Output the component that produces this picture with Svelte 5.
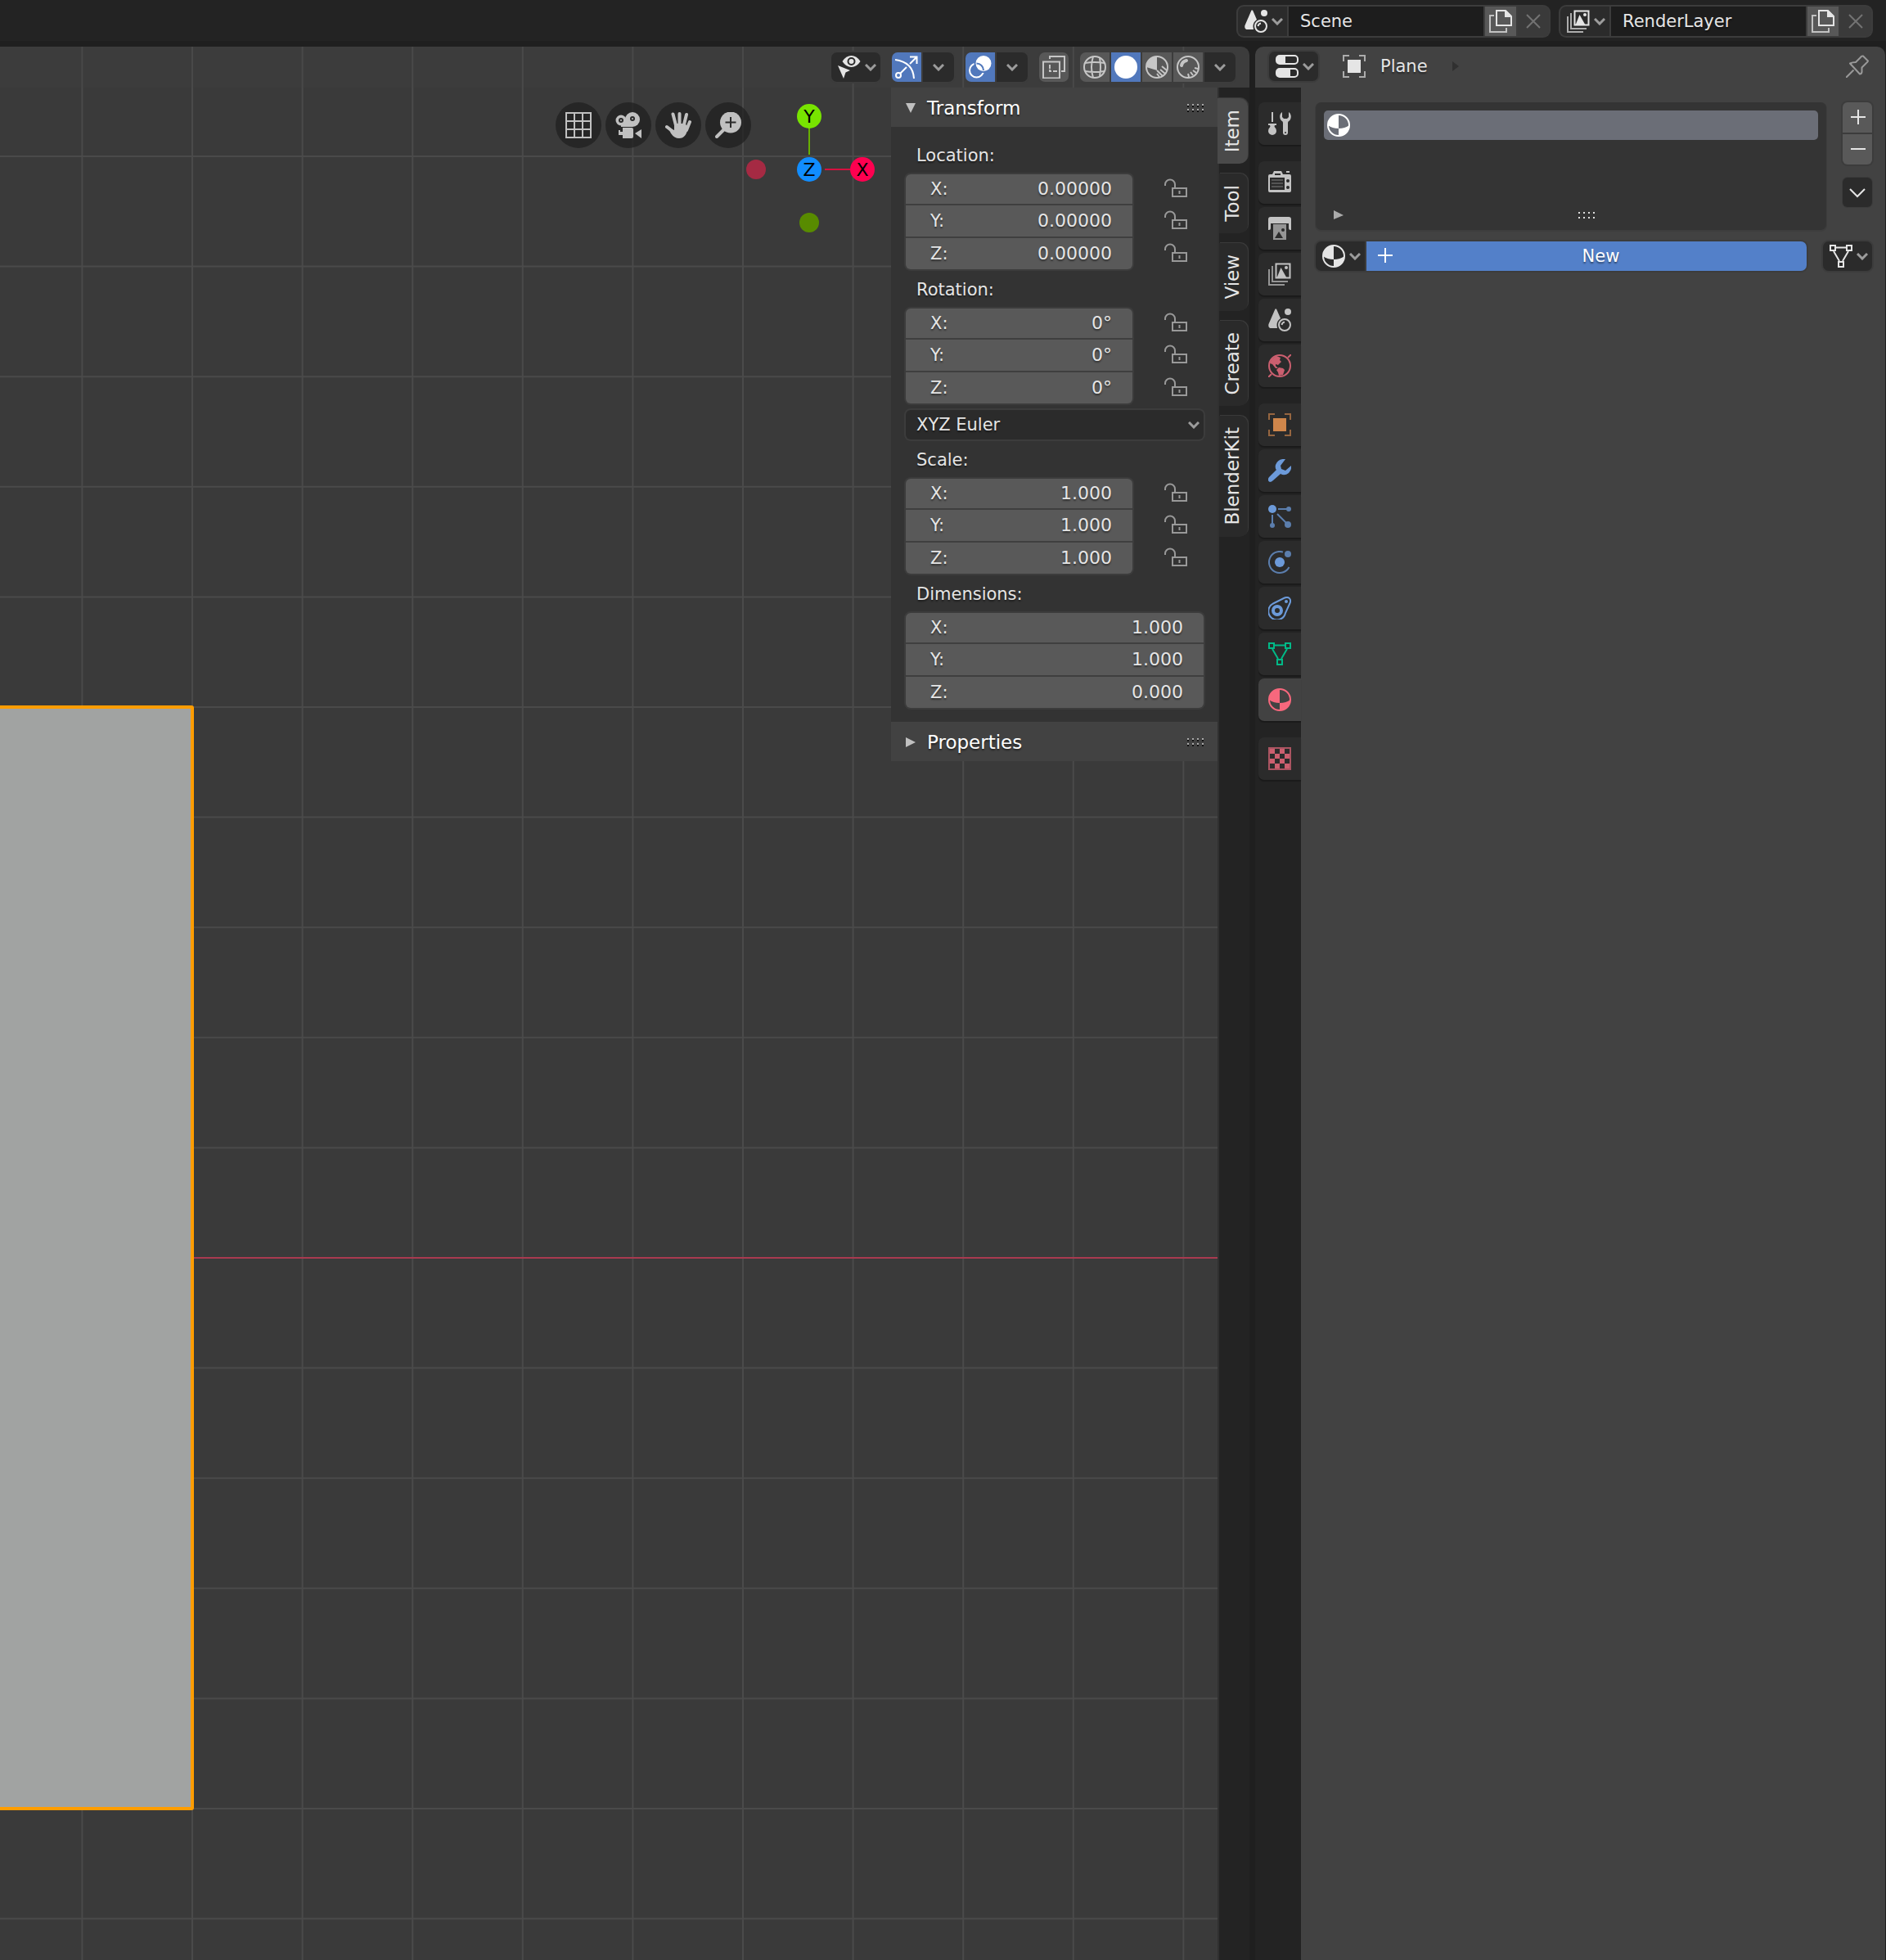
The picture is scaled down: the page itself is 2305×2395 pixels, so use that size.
<script>
  const pitch = 134.6;
  const originX = 235;
  const originY = 1537;
  const half = 5 * pitch;
  const columns = Array.from({ length: 40 }, (_, i) => originX + (i - 1) * pitch);
  const rows = Array.from({ length: 40 }, (_, i) => originY + (i - 10) * pitch).filter((y) => y !== originY);

  const dot = (x, y, r) => `<circle cx="${x}" cy="${y}" r="${r}" fill="currentColor"/>`;
  const line = (d, w = 2, extra = '') => `<path d="${d}" fill="none" stroke="currentColor" stroke-width="${w}" ${extra}/>`;
  const fill = (d, extra = '') => `<path d="${d}" fill="currentColor" ${extra}/>`;

  const mesh =
    line('M1 1h6v6h-6zM21 1h6v6h-6zM11 21h6v6h-6zM8 3.5h12M5 8l7 12M23 8l-7 12');
  const material =
    '<circle cx="14" cy="14" r="13" fill="none" stroke="currentColor" stroke-width="2"/>' +
    fill('M14 1A13 13 0 0 0 1 14Q6 18 14 18zM14 18Q22 18 27 14A13 13 0 0 1 14 27z');
  const layers =
    line('M9.5 1.5h17v17h-17z', 2) + fill('M10.5 18.5L15.5 6l7 12.5z') + dot(22, 6, 2) +
    line('M5 4v19h19M1 8v19h19', 2, 'opacity="0.7"');

  const icons = {
    scene:
      fill('M8.5 0.5h1.5L15 12A10 10 0 0 0 10.5 20.5L11 24H4C1 24-.3 22 .5 19z') + dot(24, 4, 4) +
      '<circle cx="20" cy="20" r="7" fill="none" stroke="currentColor" stroke-width="2"/>' +
      line('M16.5 20Q17 17 20 16.5', 2),
    layers,
    copy:
      line('M9 1H20L27 8V19H9z', 2) + fill('M19 1h2l6 6v2h-8z') +
      line('M6 7H1v20h20v-5', 2, 'opacity="0.75"'),
    close: line('M6 6L22 22M22 6L6 22', 2),
    toggles:
      '<rect x="1" y="1" width="26" height="10" rx="4" fill="none" stroke="currentColor" stroke-width="2"/>' +
      fill('M4 1h8v10H4Q1 10 1 6T4 1z') +
      '<rect x="1" y="17" width="26" height="10" rx="4" fill="none" stroke="currentColor" stroke-width="2"/>' +
      fill('M4 17h14v10H4Q1 26 1 22T4 17z'),
    object:
      fill('M6 6h16v16H6z') + line('M1 8V1h7M20 1h7v7M27 20v7h-7M8 27H1v-7', 2, 'opacity="0.65"'),
    pin:
      line('M0 28L9.5 18.5', 2) +
      line('M5 10.5Q8 9 12 9L18 3Q19 1 21 1.5L27 7.5Q26.5 9 25 10L19.5 15.5V21Q19 23.5 17 23.5z', 2, 'stroke-linejoin="round"'),
    visibility:
      fill('M5.5 7Q10 0 16.5 0T27.5 7Q23 14 16.5 14T5.5 7z') +
      '<circle cx="16.5" cy="7" r="4" fill="currentColor" stroke="#2b2b2b" stroke-width="2"/>' +
      fill('M0 12l15 6-5.5 2.500L7 28z'),
    gizmo:
      line('M0 5Q22 8 23 28', 2) + '<circle cx="4" cy="24" r="3" fill="none" stroke="currentColor" stroke-width="2"/>' +
      line('M6 22L14 14M18 10L26 2M18 1.5h8.500V10', 2),
    overlay:
      '<circle cx="9.5" cy="18" r="8.5" fill="none" stroke="currentColor" stroke-width="2"/>' +
      '<circle cx="18" cy="9.5" r="11.5" fill="#5178bc"/>' + dot(18, 9.5, 9.5) +
      '<path d="M9.5 9.5a8.5 8.5 0 0 1 8.5 8.5" fill="none" stroke="#5178bc" stroke-width="2"/>',
    xray: line('M1 7.5h20v20H1zM9 4V1h18v18h-4', 2) + line('M9 11v5M9 17v2h2M13 19h5', 2),
    wire:
      '<circle cx="14" cy="14" r="13" fill="none" stroke="currentColor" stroke-width="2"/>' +
      line('M12 1Q8 14 12 27M20 3Q22 14 20 25M2 9Q14 7 26 9M2 19Q14 21 26 19', 2),
    solid: dot(14, 14, 14),
    preview:
      '<circle cx="14" cy="14" r="13" fill="none" stroke="currentColor" stroke-width="2"/>' +
      fill('M14 1A13 13 0 0 0 1 14L14 18z') + line('M14 18l7 7M18 17l6 5M20 13l6 5M14 22l3 4', 2),
    rendered:
      '<circle cx="14" cy="14" r="13" fill="none" stroke="currentColor" stroke-width="2"/>' +
      line('M6 12Q7 7 12 6', 4, 'stroke-linecap="round"') + line('M22 15l4 1M20 18l4 3M17 20l3 4M14 22l1 4', 2),
    tool:
      line('M5 0v12', 2) + fill('M0 14h10v2H8q-1 1.5 0 2.500Q10 20 10 23a5 5 0 0 1-10 0Q0 20 2 18.500 3 17.500 2 16H0z') +
      fill('M17 0C14 2 13.500 6 15 9c1 2 3 2 3 4v12a3 3 0 0 0 6 0V13c0-2 2-2 3-4 1.500-3 1-7-2-9v6l-2 2h-4l-2-2z') +
      '<circle cx="21" cy="25" r="1" fill="#2b2b2b"/>',
    render:
      fill('M5 4L7 0h9l2 4h8q2 0 2 2v18q0 2-2 2H2q-2 0-2-2V6q0-2 2-2zM22 0h4v2h-4zM8 3h7v2H8z', 'fill-rule="evenodd"') +
      '<path d="M2 8h18v15H2z" fill="#2b2b2b"/><path d="M4 11h14M4 15h14M4 19h14" stroke="#555" stroke-width="2"/>' +
      '<circle cx="24" cy="12" r="2" fill="#2b2b2b"/><circle cx="24" cy="20" r="2" fill="#2b2b2b"/>',
    output:
      '<g opacity="0.7"><path d="M6 9h16v19H6z" fill="currentColor"/></g>' +
      fill('M3 0h22q3 0 3 3v13h-1q-2 0-2-2V8H3v6q0 2-2 2H0V3q0-3 3-3z') +
      '<path d="M8 26l5-8 5 8z" fill="#2b2b2b"/><circle cx="18" cy="16" r="2" fill="#2b2b2b"/>',
    world:
      '<circle cx="14" cy="14" r="13" fill="none" stroke="currentColor" stroke-width="2"/>' +
      line('M0 28l4-4M24 4l4-4', 2) +
      fill('M4 6L10 2l5 2-1 3 2 2-4 4-3-1v2l3 3-3 0-4-5-3-1zM13 16l5 1 2 2-2 6-5 1-1-4-2-3z'),
    wrench: fill('M21 0Q12-1 9 7q-1 4 1 6L1 22q-3 4 1 6 2 0 4-2l9-8q5 3 10-1 4-4 3-9l-7 6-5-2-1-4z'),
    particles:
      dot(5, 5, 5) + '<g opacity="0.75">' + dot(25, 5, 3) + dot(5, 25, 3) + dot(24, 24, 4) + line('M12 5h12M5 12v12M11 11l12 12', 2) + '</g>',
    physics:
      dot(14, 14, 6) + '<g opacity="0.75">' + dot(24, 4, 4) + line('M18 1.6A13 13 0 1 0 25.5 20', 2) + '</g>',
    constraint:
      line('M20 1.5C25-.5 28.500 3 26.500 8L21 20A10.500 10.500 0 1 1 6 8.500z', 2) +
      '<circle cx="11" cy="17" r="5" fill="none" stroke="currentColor" stroke-width="4"/>' + dot(22, 6, 2),
    mesh,
    material,
    texture:
      line('M1 1h26v26H1z', 2, 'opacity="0.8"') +
      fill('M2 2h6v6H2zM14 2h6v6h-6zM8 8h6v6H8zM20 8h6v6h-6zM2 14h6v6H2zM14 14h6v6h-6zM8 20h6v6H8zM20 20h6v6h-6z'),
    lock:
      line('M10 13h17v10H10zM1 10V8.500a6 6 0 0 1 12 0V13', 2) + fill('M17.500 16h2v4h-2z'),
    add: line('M15 4v18M6 13h18', 2),
    remove: line('M6 13h18', 2),
    plus: line('M14 4v18M5 13h18', 2),
    down: line('M5 10l9 9 9-9', 2)
  };

  const navIcons = {
    'Toggle orthographic': line('M1 1h30v30H1zM11 1v30M21 1v30M1 11h30M1 21h30', 2),
    'Camera view':
      dot(7, 10, 6.5) + dot(21, 9, 9) + fill('M7 10h14v8H7zM9 19h11q2 0 2 2v9q0 2-2 2H9zM4 22h2v2h4v4H6v0H4zM24 26l8-5v11z') +
      '<circle cx="7" cy="10" r="2" fill="none" stroke="#2a2a2a" stroke-width="2"/><circle cx="21" cy="8" r="2" fill="none" stroke="#2a2a2a" stroke-width="2"/>',
    Pan:
      line('M2 18l9 7M9.5 2.500L13 16M17.500 2v14M26 3l-3.500 14M30 12l-4 10', 4, 'stroke-linecap="round"') +
      fill('M11 14h13l4 4Q26 32 17 32 11 32 7 26L4 20l7 2z'),
    Zoom:
      dot(19, 12.5, 13) + line('M2 30l9-9', 4, 'stroke-linecap="round"') +
      '<path d="M19 6v13M12.500 12.500h13" stroke="#2a2a2a" stroke-width="2"/>'
  };

  const shading = ['wire', 'solid', 'preview', 'rendered'];
  let activeShading = $state('solid');

  const sections = [
    { title: 'Location', lock: true, values: ['0.00000', '0.00000', '0.00000'] },
    { title: 'Rotation', lock: true, values: ['0°', '0°', '0°'], mode: true },
    { title: 'Scale', lock: true, values: ['1.000', '1.000', '1.000'] },
    { title: 'Dimensions', lock: false, values: ['1.000', '1.000', '0.000'] }
  ];
  const axes = ['X', 'Y', 'Z'];

  const sideTabs = ['Item', 'Tool', 'View', 'Create', 'BlenderKit'];
  let activeSide = $state('Item');

  const propertyTabs = [
    [['tool', 'grey']],
    [['render', 'grey'], ['output', 'grey'], ['layers', 'grey'], ['scene', 'grey'], ['world', 'red']],
    [['object', 'orange'], ['wrench', 'blue'], ['particles', 'blue'], ['physics', 'blue'], ['constraint', 'blue'], ['mesh', 'green'], ['material', 'pink']],
    [['texture', 'red']]
  ];
  let activeProperty = $state('material');

  const dataBlocks = [
    { icon: 'scene', label: 'Scene', value: 'Scene' },
    { icon: 'layers', label: 'View layer', value: 'RenderLayer' }
  ];
</script>

{#snippet icon(name)}
  <svg class="icon" viewBox="0 0 28 28" aria-hidden="true">{@html icons[name]}</svg>
{/snippet}

{#snippet chevron()}
  <svg class="chevron" viewBox="0 0 14 9" aria-hidden="true"><path d="M1 1l6 6 6-6" fill="none" stroke="currentColor" stroke-width="3" /></svg>
{/snippet}

{#snippet grip()}
  <svg class="grip" viewBox="0 0 20 10" aria-hidden="true">
    <path d="M0 1h20M0 7h20" stroke="#aaaaaa" stroke-width="2" stroke-dasharray="2 4" />
    <path d="M0 3h20M0 9h20" stroke="#111111" stroke-width="2" stroke-dasharray="2 4" />
  </svg>
{/snippet}

<div class="app">
  <header class="topbar">
    {#each dataBlocks as block}
      <div class="group data-block">
        <button class="drop" aria-label="Browse {block.label}">{@render icon(block.icon)}{@render chevron()}</button>
        <input class="name" value={block.value} aria-label={block.label} />
        <button class="square lit" aria-label="Copy {block.label}">{@render icon('copy')}</button>
        <button class="square faint" aria-label="Remove {block.label}">{@render icon('close')}</button>
      </div>
    {/each}
  </header>

  <div class="editors">
    <main class="viewport">
      <svg class="canvas" aria-hidden="true">
        <g stroke="#4a4a4a" stroke-width="2">
          {#each columns as x}<line x1={x} y1="0" x2={x} y2="100%" />{/each}
          {#each rows as y}<line x1="0" y1={y - 57} x2="100%" y2={y - 57} />{/each}
        </g>
        <line x1="0" y1={originY - 57} x2="100%" y2={originY - 57} stroke="#a83a50" stroke-width="2" />
        <rect x={originX - 2 * half} y={originY - half - 57} width={2 * half} height={2 * half} rx="1" fill="#a1a3a2" stroke="#ff9d00" stroke-width="4" />
      </svg>

      <div class="view-header">
        <div class="group"><button class="drop" aria-label="Object visibility">{@render icon('visibility')}{@render chevron()}</button></div>
        <div class="group">
          <button class="tool on" aria-label="Show gizmo" aria-pressed="true">{@render icon('gizmo')}</button>
          <button class="more" aria-label="Gizmo options">{@render chevron()}</button>
        </div>
        <div class="group">
          <button class="tool on" aria-label="Show overlays" aria-pressed="true">{@render icon('overlay')}</button>
          <button class="more" aria-label="Overlay options">{@render chevron()}</button>
        </div>
        <div class="group"><button class="tool" aria-label="Toggle x-ray">{@render icon('xray')}</button></div>
        <div class="group">
          {#each shading as mode}
            <button class="tool" class:on={activeShading === mode} aria-label="{mode} shading" aria-pressed={activeShading === mode} onclick={() => (activeShading = mode)}>{@render icon(mode)}</button>
          {/each}
          <button class="more" aria-label="Shading options">{@render chevron()}</button>
        </div>
      </div>

      <div class="view-body">
        <nav class="navigate" aria-label="Navigate">
          {#each Object.entries(navIcons) as [label, art]}
            <button class="round" aria-label={label}><svg viewBox="0 0 32 32" aria-hidden="true">{@html art}</svg></button>
          {/each}
        </nav>
        <svg class="axes" viewBox="0 0 160 170" role="img" aria-label="View orientation">
          <path d="M79 35v33" stroke="#68b000" stroke-width="2" />
          <path d="M98 86h31" stroke="#d5103f" stroke-width="2" />
          <circle cx="14" cy="86" r="12" fill="#a52a43" />
          <circle cx="79" cy="151" r="12" fill="#588b00" />
          <circle cx="79" cy="21" r="15" fill="#78e400" />
          <circle cx="79" cy="86" r="15" fill="#118dff" />
          <circle cx="144" cy="86" r="15" fill="#ff0050" />
          <g class="axis-names">
            <text x="79" y="29">Y</text>
            <text x="79" y="94">Z</text>
            <text x="144" y="94">X</text>
          </g>
        </svg>

        <aside class="side-panel">
          <button class="panel-title" aria-expanded="true">
            <svg class="arrow" viewBox="0 0 12 12" aria-hidden="true"><path d="M0 0h12L6 12z" fill="#c0c0c0" /></svg>
            <span>Transform</span>{@render grip()}
          </button>
          <div class="panel-body">
            {#each sections as section}
              <fieldset>
                <legend>{section.title}:</legend>
                <div class="vector">
                  <div class="fields">
                    {#each axes as axis, i}
                      <label class="field"><span>{axis}:</span><input value={section.values[i]} /></label>
                    {/each}
                  </div>
                  {#if section.lock}
                    <div class="locks">
                      {#each axes as axis}
                        <button aria-label="Lock {section.title} {axis}">{@render icon('lock')}</button>
                      {/each}
                    </div>
                  {/if}
                </div>
                {#if section.mode}
                  <div class="select">
                    <select aria-label="Rotation mode"><option>XYZ Euler</option></select>
                    {@render chevron()}
                  </div>
                {/if}
              </fieldset>
            {/each}
          </div>
          <button class="panel-title" aria-expanded="false">
            <svg class="arrow" viewBox="0 0 12 12" aria-hidden="true"><path d="M0 0v12l12-6z" fill="#c0c0c0" /></svg>
            <span>Properties</span>{@render grip()}
          </button>
        </aside>

        <div class="side-tabs">
          {#each sideTabs as tab}
            <button class:active={activeSide === tab} onclick={() => (activeSide = tab)}><span>{tab}</span></button>
          {/each}
        </div>
      </div>
    </main>

    <section class="properties">
      <div class="prop-header">
        <div class="group"><button class="drop" aria-label="Editor type">{@render icon('toggles')}{@render chevron()}</button></div>
        <div class="crumb">
          {@render icon('object')}
          <span>Plane</span>
          <svg class="crumb-arrow" viewBox="0 0 8 12" aria-hidden="true"><path d="M0 0v12l8-6z" fill="#303030" /></svg>
        </div>
        <button class="pin" aria-label="Pin">{@render icon('pin')}</button>
      </div>

      <div class="prop-main">
        <div class="prop-tabs">
          {#each propertyTabs as cluster}
            <div class="cluster">
              {#each cluster as [name, tone]}
                <button class={tone} class:active={activeProperty === name} aria-label={name} onclick={() => (activeProperty = name)}>{@render icon(name)}</button>
              {/each}
            </div>
          {/each}
        </div>

        <div class="prop-content">
          <div class="slots">
            <div class="slot-list">
              <button class="slot" aria-label="Empty material slot">{@render icon('material')}</button>
              <div class="slot-footer">
                <button class="expand" aria-label="Filter slots"><svg class="arrow" viewBox="0 0 12 12" aria-hidden="true"><path d="M0 0v11l12-5z" fill="#aaaaaa" /></svg></button>
                <svg class="resize" viewBox="0 0 20 8" aria-hidden="true"><path d="M0 1h20M0 7h20" stroke="#dddddd" stroke-width="2" stroke-dasharray="2 4" /></svg>
              </div>
            </div>
            <div class="slot-tools">
              <div class="stack">
                <button aria-label="Add slot">{@render icon('add')}</button>
                <button aria-label="Remove slot">{@render icon('remove')}</button>
              </div>
              <button class="dark" aria-label="Slot specials">{@render icon('down')}</button>
            </div>
          </div>

          <div class="new-row">
            <div class="group new-group">
              <button class="drop" aria-label="Browse material">{@render icon('material')}{@render chevron()}</button>
              <button class="new">{@render icon('plus')}<span>New</span></button>
            </div>
            <div class="group"><button class="drop" aria-label="Link material to">{@render icon('mesh')}{@render chevron()}</button></div>
          </div>
        </div>
      </div>
    </section>
  </div>
</div>

<style>
  :global(body) {
    background: #1f1f1f;
  }

  .app {
    display: flex;
    flex-direction: column;
    min-height: 100vh;
    background: #1f1f1f;
    color: #e5e5e5;
    font-family: "DejaVu Sans", sans-serif;
    font-size: 21px;
    line-height: 28px;
    text-shadow: 0 2px 2px rgba(0, 0, 0, 0.45);
  }

  button,
  input,
  select {
    margin: 0;
    padding: 0;
    border: 0;
    background: none;
    color: inherit;
    font: inherit;
    text-shadow: inherit;
    min-width: 0;
  }

  svg {
    display: block;
    flex: none;
  }

  .icon {
    width: 28px;
    height: 28px;
  }

  .chevron {
    width: 14px;
    height: 9px;
    color: #9c9c9c;
  }

  .grip {
    width: 20px;
    height: 10px;
  }

  .arrow {
    width: 12px;
    height: 12px;
  }

  .topbar {
    box-sizing: border-box;
    display: flex;
    justify-content: flex-end;
    align-items: center;
    gap: 14px;
    height: 50px;
    padding: 2px 18px 0 0;
    background: #232323;
  }

  .group {
    display: flex;
    gap: 2px;
    height: 36px;
    border-radius: 7px;
    background: #3c3c3c;
    box-shadow: 0 0 0 2px #3c3c3c;
    overflow: hidden;
    flex: none;
  }

  .drop {
    display: flex;
    align-items: center;
    gap: 5px;
    width: 60px;
    padding-left: 8px;
    background: #2b2b2b;
  }

  .name {
    width: 238px;
    box-sizing: border-box;
    padding-left: 14px;
    background: #1d1d1d;
  }

  .square {
    display: flex;
    align-items: center;
    justify-content: center;
    width: 38px;
  }

  .lit {
    background: #585858;
  }

  .faint {
    background: #3a3a3a;
    color: #737373;
  }

  .editors {
    flex: 1;
    display: grid;
    grid-template-columns: minmax(0, 1527fr) minmax(0, 770fr);
    gap: 7px;
    padding: 7px 1px 0 0;
  }

  .viewport {
    position: relative;
    display: flex;
    flex-direction: column;
    background: #3a3a3a;
    border-radius: 0 10px 0 0;
    overflow: hidden;
  }

  .canvas {
    position: absolute;
    inset: 0;
    width: 100%;
    height: 100%;
  }

  .view-header {
    position: relative;
    display: flex;
    align-items: center;
    justify-content: flex-end;
    gap: 14px;
    height: 50px;
    padding-right: 17px;
    background: rgba(70, 70, 70, 0.2);
  }

  .tool,
  .more {
    display: flex;
    align-items: center;
    justify-content: center;
    width: 36px;
    background: #585858;
    color: #c6c6c6;
  }

  .more {
    width: 38px;
    background: #2b2b2b;
  }

  .on {
    background: #5178bc;
    color: #ffffff;
  }

  .view-body {
    position: relative;
    flex: 1;
    display: flex;
    justify-content: flex-end;
    align-items: flex-start;
  }

  .navigate {
    display: flex;
    gap: 5px;
    margin-top: 18px;
  }

  .round {
    display: flex;
    align-items: center;
    justify-content: center;
    width: 56px;
    height: 56px;
    border-radius: 50%;
    background: rgba(30, 30, 30, 0.7);
    color: #c0c0c0;
  }

  .round svg {
    width: 32px;
    height: 32px;
  }

  .axes {
    width: 160px;
    height: 170px;
    margin: 14px 19px 0 -8px;
  }

  .axis-names {
    fill: #000000;
    font-size: 22px;
    text-anchor: middle;
    text-shadow: none;
  }

  .side-panel {
    display: flex;
    flex-direction: column;
    width: 399px;
  }

  .panel-title {
    box-sizing: border-box;
    display: flex;
    align-items: center;
    gap: 14px;
    height: 48px;
    padding: 2px 17px 0 18px;
    background: #424242;
    color: #ffffff;
    font-size: 23px;
    text-align: left;
  }

  .panel-title span {
    flex: 1;
  }

  .panel-body {
    padding: 10px 17px 17px 18px;
    background: #333333;
  }

  fieldset {
    margin: 0;
    padding: 0;
    border: 0;
    min-width: 0;
  }

  legend {
    padding: 0 0 0 13px;
    height: 48px;
    line-height: 51px;
  }

  .vector {
    display: flex;
  }

  .fields {
    flex: 1;
    display: flex;
    flex-direction: column;
    gap: 2px;
    border-radius: 6px;
    background: #3f3f3f;
    box-shadow: 0 0 0 2px #3c3c3c;
    overflow: hidden;
  }

  .field {
    display: flex;
    align-items: center;
    height: 38px;
    padding: 0 25px 0 30px;
    background: #595959;
  }

  .field:first-child,
  .locks button:first-child {
    height: 36px;
  }

  .field input {
    flex: 1;
    width: 0;
    text-align: right;
    font-size: 22px;
  }

  .locks {
    display: flex;
    flex-direction: column;
    gap: 2px;
    width: 28px;
    margin: 0 20px 0 39px;
    color: #999999;
  }

  .locks button {
    display: flex;
    align-items: center;
    height: 38px;
  }

  .select {
    display: grid;
    align-items: center;
    margin-top: 8px;
    height: 36px;
    border-radius: 6px;
    background: #2b2b2b;
    box-shadow: 0 0 0 2px #3c3c3c;
  }

  .select select {
    grid-area: 1 / 1;
    appearance: none;
    height: 36px;
    padding-left: 13px;
  }

  .select .chevron {
    grid-area: 1 / 1;
    justify-self: end;
    margin-right: 5px;
    pointer-events: none;
  }

  .side-tabs {
    align-self: stretch;
    box-sizing: border-box;
    display: flex;
    flex-direction: column;
    gap: 12px;
    width: 39px;
    padding: 13px 2px 0 0;
    background: linear-gradient(to right, #303030 2px, #232323 2px);
  }

  .side-tabs button {
    box-sizing: border-box;
    display: flex;
    justify-content: center;
    align-items: center;
    padding: 14px 3px 14px 0;
    margin-left: 2px;
    border-radius: 0 10px 10px 0;
    background: #2a2a2a;
    box-shadow: 1px -1px 0 #3a3a3a;
    font-size: 23px;
    text-shadow: none;
  }

  .side-tabs button.active {
    margin-left: 0;
    padding-right: 1px;
    background: #4a4a4a;
  }

  .side-tabs span {
    writing-mode: vertical-rl;
    transform: rotate(180deg);
  }

  .properties {
    display: flex;
    flex-direction: column;
    background: #424242;
    border-radius: 10px 10px 0 0;
    overflow: hidden;
  }

  .prop-header {
    box-sizing: border-box;
    display: flex;
    align-items: center;
    justify-content: space-between;
    gap: 30px;
    height: 50px;
    padding: 0 20px 2px 17px;
  }

  .crumb {
    flex: 1;
    display: flex;
    align-items: center;
  }

  .crumb span {
    margin: 0 30px 0 18px;
  }

  .crumb-arrow {
    width: 8px;
    height: 12px;
  }

  .pin {
    color: #999999;
  }

  .prop-main {
    flex: 1;
    display: flex;
  }

  .prop-tabs {
    display: flex;
    flex-direction: column;
    gap: 20px;
    width: 52px;
    padding: 18px 0 0 4px;
    background: #232323;
  }

  .cluster {
    display: flex;
    flex-direction: column;
    gap: 4px;
  }

  .cluster button {
    display: flex;
    align-items: center;
    height: 52px;
    padding-left: 12px;
    border-radius: 7px 0 0 7px;
    background: #2b2b2b;
    box-shadow: 0 2px 1px rgba(0, 0, 0, 0.25);
  }

  .cluster button.active {
    background: #424242;
  }

  .grey {
    color: #c3c3c3;
  }

  .red {
    color: #cb5f6f;
  }

  .orange {
    color: #cf864b;
  }

  .blue {
    color: #6c9ad9;
  }

  .green {
    color: #00b987;
  }

  .pink {
    color: #f7687d;
  }

  .prop-content {
    flex: 1;
    min-width: 0;
    padding: 18px 16px 18px 18px;
  }

  .slots {
    display: flex;
    gap: 20px;
  }

  .slot-list {
    flex: 1;
    box-sizing: border-box;
    display: flex;
    flex-direction: column;
    justify-content: space-between;
    height: 156px;
    padding-top: 10px;
    border-radius: 7px;
    background: #343434;
    box-shadow: 0 1px 0 1px #3d3d3d;
  }

  .slot {
    display: flex;
    align-items: center;
    height: 36px;
    margin: 0 10px;
    padding-left: 4px;
    border-radius: 5px;
    background: #6b6e77;
    color: #ffffff;
  }

  .slot-footer {
    display: flex;
    align-items: center;
    height: 36px;
  }

  .expand {
    width: 38px;
    padding-left: 22px;
    box-sizing: border-box;
  }

  .resize {
    width: 20px;
    height: 8px;
    margin: 0 auto;
  }

  .slot-tools {
    display: flex;
    flex-direction: column;
    gap: 16px;
    width: 36px;
  }

  .slot-tools button {
    display: flex;
    align-items: center;
    justify-content: center;
    width: 36px;
    height: 37px;
    background: #595959;
  }

  .slot-tools .dark {
    height: 36px;
    border-radius: 6px;
    background: #2b2b2b;
    box-shadow: 0 0 0 1px #3c3c3c;
  }

  .stack {
    display: flex;
    flex-direction: column;
    gap: 2px;
    border-radius: 6px;
    background: #3c3c3c;
    box-shadow: 0 0 0 2px #3c3c3c;
    overflow: hidden;
  }

  .new-row {
    display: flex;
    gap: 20px;
    margin-top: 14px;
  }

  .new-group {
    flex: 1;
  }

  .new {
    flex: 1;
    display: flex;
    align-items: center;
    padding: 0 2px 0 9px;
    background: #5380c9;
    color: #ffffff;
  }

  .new span {
    flex: 1;
    text-align: center;
  }
</style>
